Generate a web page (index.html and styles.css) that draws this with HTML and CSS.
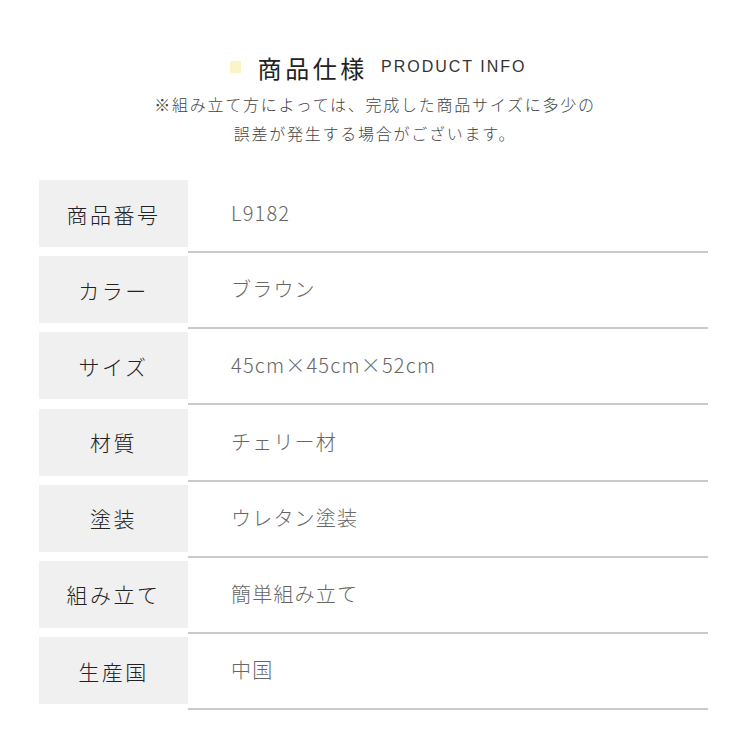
FILE: index.html
```html
<!DOCTYPE html>
<html lang="ja">
<head>
<meta charset="utf-8">
<link rel="stylesheet" href="styles.css">
</head>
<body>
<div class="page">
  <header class="head">
    <h1 class="title"><span class="mark"></span><span class="jp">商品仕様</span><span class="en">PRODUCT INFO</span></h1>
    <p class="note">※組み立て方によっては、完成した商品サイズに多少の<br>誤差が発生する場合がございます。</p>
  </header>
  <div class="spec">
    <div class="row"><div class="label">商品番号</div><div class="value">L9182</div></div>
    <div class="row"><div class="label">カラー</div><div class="value">ブラウン</div></div>
    <div class="row"><div class="label">サイズ</div><div class="value">45cm×45cm×52cm</div></div>
    <div class="row"><div class="label">材質</div><div class="value">チェリー材</div></div>
    <div class="row"><div class="label">塗装</div><div class="value">ウレタン塗装</div></div>
    <div class="row"><div class="label">組み立て</div><div class="value">簡単組み立て</div></div>
    <div class="row"><div class="label">生産国</div><div class="value">中国</div></div>
  </div>
</div>
</body>
</html>
```
FILE: styles.css
```css
* { box-sizing: border-box; }
html, body { margin: 0; padding: 0; background: #fff; }
body {
  font-family: "Noto Sans CJK JP", "Noto Sans", sans-serif;
  color: #333;
}
.page {
  width: 750px;
  height: 750px;
  padding: 48px 42px 0 39px;
}
.head { text-align: center; }
.title {
  margin: 0;
  display: flex;
  align-items: center;
  justify-content: center;
  height: 38px;
  font-weight: 400;
  padding-left: 9px;
}
.mark {
  width: 11px;
  height: 12px;
  background: #fbf4c6;
  margin-right: 17px;
}
.jp {
  font-size: 24px;
  letter-spacing: 3.6px;
  color: #222;
  font-weight: 400;
}
.en {
  font-family: "Liberation Sans", Arial, sans-serif;
  font-size: 16px;
  letter-spacing: 2px;
  margin-left: 13px;
  color: #333;
}
.note {
  margin: 4px 0 0;
  font-size: 16px;
  line-height: 29px;
  letter-spacing: 1.75px;
  color: #444;
  font-weight: 300;
  padding-left: 3px;
}
.spec {
  margin-top: 32px;
  display: flex;
  flex-direction: column;
  gap: 3.2px;
}
.row {
  display: flex;
  align-items: flex-start;
}
.label {
  width: 149px;
  height: 67px;
  background: #f0f0f0;
  display: flex;
  align-items: center;
  justify-content: center;
  font-size: 21px;
  letter-spacing: 2.5px;
  color: #222;
  font-weight: 300;
}
.value {
  flex: 1;
  height: 73px;
  border-bottom: 2px solid #cacaca;
  padding: 0 0 6px 43px;
  display: flex;
  align-items: center;
  font-size: 20px;
  letter-spacing: 1.2px;
  color: #666;
  font-weight: 300;
}
```
